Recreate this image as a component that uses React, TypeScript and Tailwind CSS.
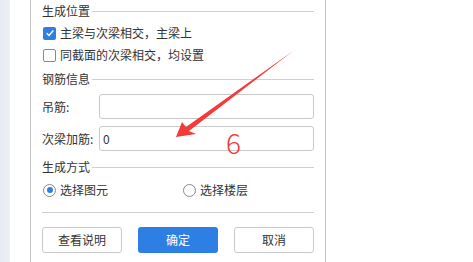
import React from 'react';

const cjk = { fontFamily: '"Noto Sans CJK SC", "Liberation Sans", sans-serif' };

function SectionTitle({ label }: { label: string }) {
  return (
    <div className="flex h-4 items-center">
      <span className="text-[12px] leading-4 text-[#333]">{label}</span>
      <div className="ml-[2px] h-px flex-1 bg-[#d0d0d0]" />
    </div>
  );
}

function CheckRow({ label, checked }: { label: string; checked?: boolean }) {
  return (
    <div className="flex h-5 items-center">
      {checked ? (
        <span className="ml-px flex h-[13px] w-[13px] items-center justify-center rounded-[2px] bg-[#2d7fe3]">
          <svg viewBox="0 0 12 12" className="h-[10px] w-[10px]">
            <path d="M2 6.3 L4.8 9 L10 3" fill="none" stroke="white" strokeWidth="1.8" />
          </svg>
        </span>
      ) : (
        <span className="ml-px h-[13px] w-[13px] rounded-[2px] border border-[#8a8a8a] bg-white" />
      )}
      <span className="ml-[4px] text-[12px] text-[#333]">{label}</span>
    </div>
  );
}

function InputRow({ label, value }: { label: string; value?: string }) {
  return (
    <div className="flex h-[25px] items-center">
      <span className="w-[57px] text-[12px] text-[#333]">{label}</span>
      <div className="flex h-full flex-1 items-center rounded-[3px] border border-[#c9c9c9] px-[3px] text-[12px] text-[#333]">
        {value}
      </div>
    </div>
  );
}

function Radio({ label, checked }: { label: string; checked?: boolean }) {
  return (
    <div className="flex items-center">
      <span className="ml-px flex h-[13px] w-[13px] items-center justify-center rounded-full border border-[#8a8a8a] bg-white">
        {checked && <span className="h-[6px] w-[6px] rounded-full bg-[#2d7fe3]" />}
      </span>
      <span className="ml-[4px] text-[12px] text-[#333]">{label}</span>
    </div>
  );
}

export default function App() {
  return (
    <div className="relative flex h-[262px] w-[473px] overflow-hidden bg-white" style={cjk}>
      {/* background strip */}
      <div className="w-[10px] bg-gradient-to-r from-[#e6eaf2] to-[#eef1f6]" />
      <div className="w-[20px]" />

      {/* dialog */}
      <div className="w-[296px] border-x border-[#c4c4c4] pl-[11px] pr-[11px] pt-[3px]">
        <div className="flex w-[272px] flex-col">
          <SectionTitle label="生成位置" />
          <div className="mt-[4px]">
            <CheckRow label="主梁与次梁相交，主梁上" checked />
          </div>
          <div className="mt-[2px]">
            <CheckRow label="同截面的次梁相交，均设置" />
          </div>

          <div className="mt-[6px]">
            <SectionTitle label="钢筋信息" />
          </div>
          <div className="mt-[7px]">
            <InputRow label="吊筋:" />
          </div>
          <div className="mt-[7px]">
            <InputRow label="次梁加筋:" value="0" />
          </div>

          <div className="mt-[8px]">
            <SectionTitle label="生成方式" />
          </div>
          <div className="mt-[5px] flex h-5 items-center">
            <div className="w-[140px]">
              <Radio label="选择图元" checked />
            </div>
            <Radio label="选择楼层" />
          </div>

          <div className="mt-[12px] h-px bg-[#d0d0d0]" />

          <div className="mt-[14px] flex justify-between">
            <button className="h-[26px] w-[80px] rounded-[3px] border border-[#c9c9c9] bg-white text-[12px] text-[#333]">
              查看说明
            </button>
            <button className="h-[26px] w-[80px] rounded-[3px] bg-[#2d7fe3] text-[12px] text-white">
              确定
            </button>
            <button className="h-[26px] w-[80px] rounded-[3px] border border-[#c9c9c9] bg-white text-[12px] text-[#333]">
              取消
            </button>
          </div>
        </div>
      </div>

      {/* annotation */}
      <svg className="pointer-events-none absolute left-0 top-0" width="473" height="262">
        <polygon points="176,137 182,122 186,127 293,51 189,131 196,134" fill="#f53a3a" />
      </svg>
      <span
        className="absolute left-[226px] top-[128px] text-[28px] font-light leading-[28px] text-[#f53a3a]"
        style={{ fontFamily: '"Noto Sans CJK SC", "Noto Sans", sans-serif' }}
      >
        6
      </span>
    </div>
  );
}
